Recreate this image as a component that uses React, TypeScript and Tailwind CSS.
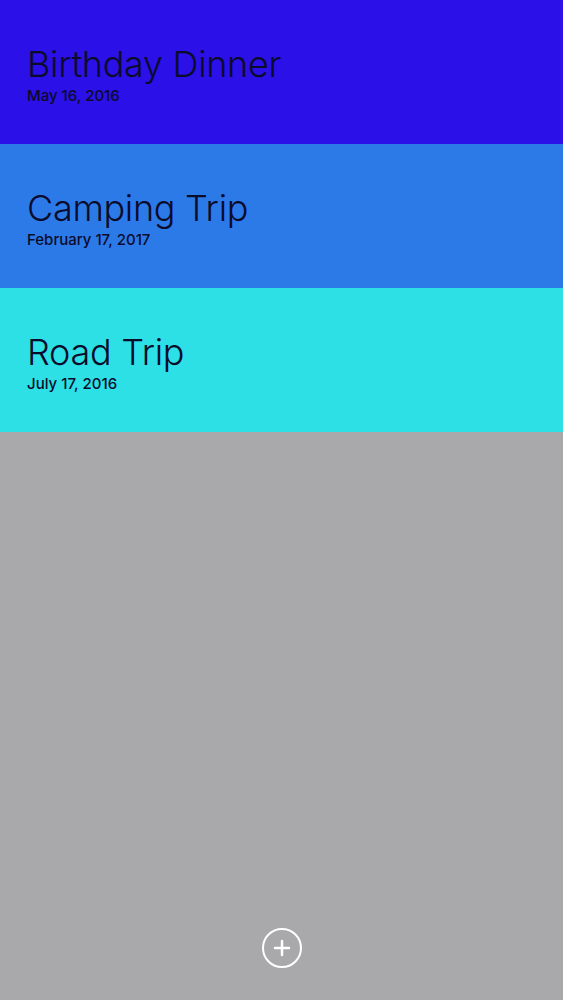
import { Plus } from "lucide-react";

interface Trip {
  title: string;
  date: string;
  color: string;
}

const trips: Trip[] = [
  { title: "Birthday Dinner", date: "May 16, 2016", color: "bg-[#2b10e8]" },
  { title: "Camping Trip", date: "February 17, 2017", color: "bg-[#2c7ae8]" },
  { title: "Road Trip", date: "July 17, 2016", color: "bg-[#2ce0e6]" },
];

const TripRow = ({ trip }: { trip: Trip }) => {
  return (
    <div className={`h-[144px] w-full flex flex-col pl-[27px] pt-[42px] ${trip.color}`}>
      <p className="text-[36px] leading-[44px] font-light text-[#0b0b2a] tracking-[-0.3px]">
        {trip.title}
      </p>
      <p className="text-[15px] leading-[18px] font-medium text-[#0b0b2a] mt-[1px]">
        {trip.date}
      </p>
    </div>
  );
};

export default function App() {
  return (
    <div
      className="w-full h-[1000px] flex flex-col bg-[#a9a9ab]"
      style={{ fontFamily: "Inter, 'Noto Sans', sans-serif" }}
    >
      {trips.map((trip) => (
        <TripRow key={trip.title} trip={trip} />
      ))}
      <div className="flex-1 flex items-end justify-center pb-[32px]">
        <button className="w-[40px] h-[40px] rounded-full border-2 border-white flex items-center justify-center">
          <Plus size={24} strokeWidth={2.5} color="white" />
        </button>
      </div>
    </div>
  );
}
